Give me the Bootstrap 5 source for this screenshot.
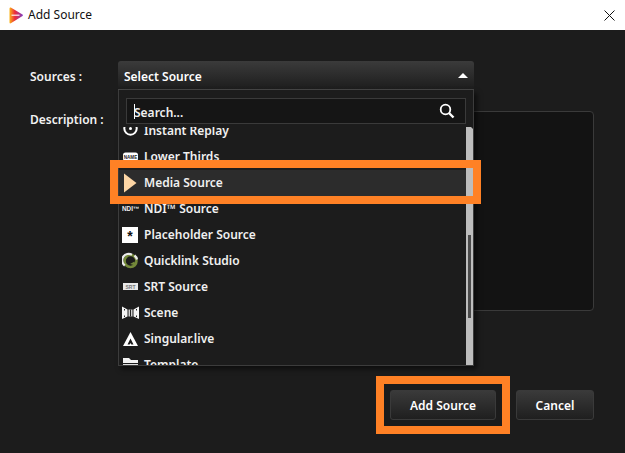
<!DOCTYPE html>
<html lang="en"><head><meta charset="utf-8"><title>Add Source</title>
<link href="https://cdn.jsdelivr.net/npm/bootstrap@5.3.0/dist/css/bootstrap.min.css" rel="stylesheet">
<style>
html,body{margin:0;height:453px;overflow:hidden;background:#1c1c1c}
body,.dlg-btn,.dlg-text{font-family:"Noto Sans","Open Sans",sans-serif}
.dlg{width:625px;height:453px}
.dlg-title{height:30px;background:#fff;color:#111;font-size:12px;padding:0 10px 0 9px}
.dlg-title-name{margin-left:5px;margin-top:-1px}
.dlg-main{background:#1c1c1c;color:#f2f2f2;font-size:12px;font-weight:600;padding:31px 31px 0 30px;flex:1}
.dlg-label{width:88px;flex:none}
.dlg-label-a{padding-top:3px}
.dlg-select{position:relative;height:29px;width:356px;flex:none;background:linear-gradient(#3b3b3b,#1d1d1d);border-radius:3px 3px 0 0;padding:3px 6px 0;color:#fff;border-bottom:1px solid #474747}
.dlg-caret{width:0;height:0;border-left:5.500px solid transparent;border-right:5.500px solid transparent;border-bottom:5.500px solid #fff;margin-top:-3px}
.dlg-panel{position:absolute;left:0;top:29px;width:356px;height:276px;background:#1c1c1c;border:solid #3c3c3c;border-width:0 1px 1px 1px;box-shadow:3px 3px 5px rgba(0,0,0,.55);z-index:2}
.dlg-search{height:26px;margin:8px 7px 3px 7px;background:#151515;border:1px solid #3a3a3a;padding:0 10px 0 7px}
.dlg-cursor{width:1px;height:15px;background:#fff;margin-right:-1px;flex:none}
.dlg-search-text{color:#f0f0f0;padding-top:3px}
.dlg-listwrap{height:238px;overflow:hidden}
.dlg-list{flex:1;margin-top:-9px}
.dlg-row{height:26px;padding-left:3px;flex:none;color:#f0f0f0}
.dlg-row-on{background:#2c2c2c}
.dlg-ico{width:17px;height:20px;flex:none;margin-right:5px;display:block}
.dlg-track{width:7px;background:#bdbdbd;flex:none;clip-path:polygon(0 0,5px 0,7px 2px,7px 100%,0 100%)}
.dlg-thumb{width:3px;height:83px;background:#4a4a4a;margin:108px 0 0 2px}
.dlg-desc{height:200px;flex:1;background:#131313;border:1px solid #3a3a3a;border-radius:4px}
.dlg-row2{margin-top:21px}
.dlg-btn{height:30px;background:linear-gradient(#3a3a3a,#1f1f1f);border:1px solid #3a3a3a;border-radius:3px;color:#fff;font-size:12px;font-weight:600;padding:2px 0 0}
.dlg-btn:hover{color:#fff}
.dlg-add{width:106px}
.dlg-cancel{width:78px}
.dlg-foot{margin-top:79px;gap:20px}
.dlg-mark{position:absolute;border:solid #ff8125;z-index:5;pointer-events:none}
.dlg-mark-a{left:110px;top:160px;width:371px;height:44px;border-width:8px}
.dlg-mark-b{left:376px;top:376px;width:134px;height:58px;border-width:8px}
</style></head>
<body>
<div class="dlg d-flex flex-column position-relative">
  <div class="dlg-title d-flex align-items-center">
    <svg width="14" height="17" viewBox="0 0 14 17" aria-hidden="true"><defs><linearGradient id="lg" x1="0" y1="0" x2="1" y2="0"><stop offset="0" stop-color="#fbb316"/><stop offset=".4" stop-color="#ec2d3a"/><stop offset="1" stop-color="#7e3fc4"/></linearGradient></defs><path d="M1.500.5C1 .5.500 1 .5 1.500v14c0 .8.700 1.200 1.300.8L13.500 9c.6-.3.6-1 0-1.400L1.800.6z" fill="url(#lg)"/><path d="M2.500 7.500h8v1.500h-8z" fill="#fff" opacity=".75"/></svg>
    <span class="dlg-title-name dlg-text">Add Source</span>
    <svg class="ms-auto" width="11" height="11" viewBox="0 0 11 11" aria-hidden="true"><path d="M.5.5l10 10M10.500.5l-10 10" stroke="#111" stroke-width="1" fill="none"/></svg>
  </div>
  <div class="dlg-main d-flex flex-column">
    <div class="d-flex align-items-center">
      <div class="dlg-label dlg-label-a">Sources :</div>
      <div class="dlg-select d-flex align-items-center justify-content-between">
        <span>Select Source</span><span class="dlg-caret"></span>
        <div class="dlg-panel d-flex flex-column">
          <div class="dlg-search d-flex align-items-center">
            <span class="dlg-cursor"></span><span class="dlg-search-text">Search...</span>
            <svg class="ms-auto" width="16" height="16" viewBox="0 0 16 16" aria-hidden="true"><circle cx="6.500" cy="6.500" r="4.800" fill="none" stroke="#fff" stroke-width="1.800"/><path d="M10 10l4.500 4.500" stroke="#fff" stroke-width="2.400"/></svg>
          </div>
          <div class="dlg-listwrap d-flex">
            <div class="dlg-list d-flex flex-column">
              <div class="dlg-row d-flex align-items-center"><svg class="dlg-ico" viewBox="0 0 17 20" aria-hidden="true"><circle cx="8.500" cy="7.500" r="6.200" fill="none" stroke="#fff" stroke-width="2"/><circle cx="8.500" cy="7.500" r="1.500" fill="#fff"/></svg>Instant Replay</div>
              <div class="dlg-row d-flex align-items-center"><svg class="dlg-ico" viewBox="0 0 17 20" aria-hidden="true"><rect x="1" y="5.500" width="15" height="8.500" rx="2.500" fill="#fff"/><text x="8.500" y="11.500" font-size="4.600" font-weight="700" text-anchor="middle" fill="#222" font-family="Liberation Sans">NAME</text></svg>Lower Thirds</div>
              <div class="dlg-row dlg-row-on d-flex align-items-center"><svg class="dlg-ico" viewBox="0 0 17 20" aria-hidden="true"><path d="M2 .5L14.500 10 2 19.500z" fill="#fdd6a5"/></svg>Media Source</div>
              <div class="dlg-row d-flex align-items-center"><svg class="dlg-ico" viewBox="0 0 17 20" aria-hidden="true"><text x="0" y="12" font-size="6.400" fill="#eee" font-family="Liberation Sans">NDI™</text></svg>NDI™ Source</div>
              <div class="dlg-row d-flex align-items-center"><svg class="dlg-ico" viewBox="0 0 17 20" aria-hidden="true"><rect x="0" y="2" width="16" height="16" fill="#fff"/><text x="8" y="16" font-size="14" font-weight="700" text-anchor="middle" fill="#111" font-family="Liberation Sans">*</text></svg>Placeholder Source</div>
              <div class="dlg-row d-flex align-items-center"><svg class="dlg-ico" viewBox="0 0 17 20" aria-hidden="true"><circle cx="8.500" cy="10" r="6" fill="none" stroke="#74893a" stroke-width="2.600"/><path d="M2.800 14.500A6.500 6.500 0 0 1 10 3.700" fill="none" stroke="#ececec" stroke-width="2.200"/><path d="M12.500 4.500a6.500 6.500 0 0 1 2.500 4" fill="none" stroke="#ececec" stroke-width="2.200"/><path d="M8 13l4.500-2.500 1 4z" fill="#74893a"/></svg>Quicklink Studio</div>
              <div class="dlg-row d-flex align-items-center"><svg class="dlg-ico" viewBox="0 0 17 20" aria-hidden="true"><rect x="1" y="6" width="15" height="7" fill="#e8e8e8"/><text x="8.500" y="11.500" font-size="5" font-weight="700" text-anchor="middle" fill="#777" font-family="Liberation Sans">SRT</text></svg>SRT Source</div>
              <div class="dlg-row d-flex align-items-center"><svg class="dlg-ico" viewBox="0 0 17 20" aria-hidden="true"><path d="M0 3.500l5.500 3v7L0 16zM17 3.500l-5.500 3v7L17 16z" fill="#f4f4f4"/><path d="M6.500 6.500h4v7h-4z" fill="#cfcfcf"/><path d="M2.500 6v1.500M2.500 12.500V14M14.500 6v1.500M14.500 12.500V14M8.500 6.500v7" stroke="#222" stroke-width="1"/></svg>Scene</div>
              <div class="dlg-row d-flex align-items-center"><svg class="dlg-ico" viewBox="0 0 17 20" aria-hidden="true"><path d="M8.500 3L16 17H1z" fill="#fff"/><path d="M8.500 9.500L5.500 15.500h2.200l.8-1.500.8 1.500h2.200z" fill="#1c1c1c"/></svg>Singular.live</div>
              <div class="dlg-row d-flex align-items-center"><svg class="dlg-ico" viewBox="0 0 17 20" aria-hidden="true"><path d="M1 3h6l2 2h7v3H1z" fill="#f2f2f2"/><path d="M1 9h15v1.500H1zM1 12h15v1.500H1z" fill="#ddd"/></svg>Template</div>
            </div>
            <div class="dlg-track"><div class="dlg-thumb"></div></div>
          </div>
        </div>
      </div>
    </div>
    <div class="d-flex align-items-start dlg-row2">
      <div class="dlg-label">Description :</div>
      <div class="dlg-desc"></div>
    </div>
    <div class="d-flex justify-content-end dlg-foot">
      <button type="button" class="btn dlg-btn dlg-add">Add Source</button>
      <button type="button" class="btn dlg-btn dlg-cancel">Cancel</button>
    </div>
  </div>
  <div class="dlg-mark dlg-mark-a"></div>
  <div class="dlg-mark dlg-mark-b"></div>
</div>
<script src="https://cdn.jsdelivr.net/npm/bootstrap@5.3.0/dist/js/bootstrap.bundle.min.js"></script>
</body></html>
